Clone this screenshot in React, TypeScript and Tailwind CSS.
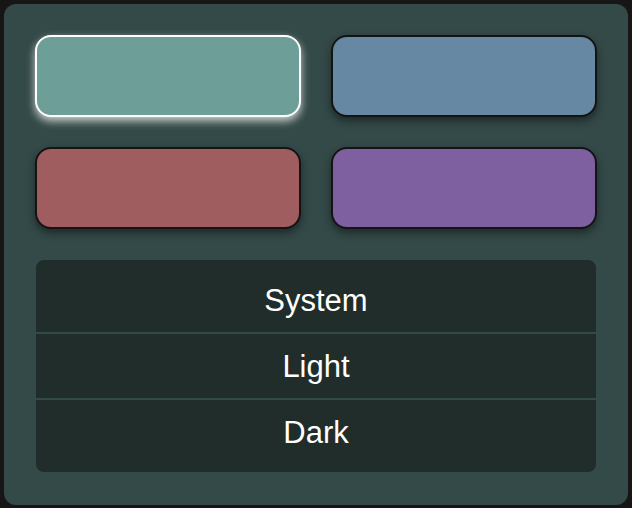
import React, { useState } from 'react';

const swatches = [
  { id: 'teal', color: 'bg-[#6d9f98]' },
  { id: 'blue', color: 'bg-[#6688a3]' },
  { id: 'red', color: 'bg-[#a05d5f]' },
  { id: 'purple', color: 'bg-[#7e60a0]' },
];

const modes = [
  { label: 'System', cls: 'h-[72px] pt-[10px]' },
  { label: 'Light', cls: 'h-[66px] pt-[3px] border-t-2 border-[#344a48]' },
  { label: 'Dark', cls: 'h-[74px] pb-[5px] border-t-2 border-[#344a48]' },
];

const App: React.FC = () => {
  const [selected, setSelected] = useState('teal');
  const [mode, setMode] = useState('System');

  return (
    <div className="min-h-screen bg-[#171515] p-1 font-['Liberation_Sans',Arial,sans-serif]">
      <div className="rounded-xl bg-[#344a48] pt-[31px] px-[31px] pb-[33px]">
        {/* Theme colours */}
        <div className="grid grid-cols-2 gap-[30px]">
          {swatches.map((s) => (
            <button
              key={s.id}
              onClick={() => setSelected(s.id)}
              className={`h-[82px] rounded-2xl border-2 ${s.color} ${
                selected === s.id
                  ? 'border-white shadow-[0_4px_9px_rgba(255,255,255,0.75)]'
                  : 'border-[#141414] shadow-[0_4px_8px_rgba(0,0,0,0.45)]'
              }`}
            />
          ))}
        </div>

        {/* Appearance */}
        <div className="mt-[31px] mx-px rounded-lg bg-[#202d2b] overflow-hidden">
          {modes.map((m) => (
            <button
              key={m.label}
              onClick={() => setMode(m.label)}
              className={`w-full flex items-center justify-center text-[31px] text-white ${m.cls}`}
              aria-pressed={mode === m.label}
            >
              {m.label}
            </button>
          ))}
        </div>
      </div>
    </div>
  );
};

export default App;
